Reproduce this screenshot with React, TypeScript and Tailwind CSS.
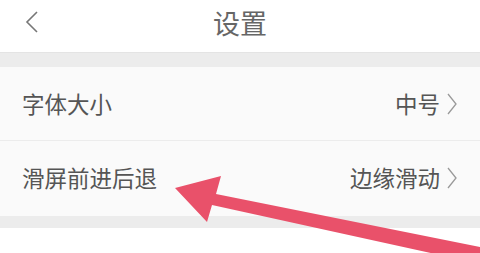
export default function App() {
  return (
    <div
      className="relative w-[480px] h-[253px] overflow-hidden bg-white text-[#555]"
      style={{ fontFamily: '"Noto Sans CJK SC", "Noto Sans", sans-serif' }}
    >
      {/* Header */}
      <header className="relative h-[53px] flex items-center justify-center bg-white border-b border-[#e4e4e4]">
        <svg
          className="absolute left-[24px] top-[10px]"
          width="16"
          height="24"
          viewBox="0 0 16 24"
          fill="none"
        >
          <path d="M13 2 L3 12 L13 22" stroke="#777" strokeWidth="1.6" />
        </svg>
        <h1 className="text-[27px] leading-none text-[#666] -mt-[8px]">设置</h1>
      </header>

      <div className="h-[14px] bg-[#ececec]" />

      {/* Rows */}
      <div className="bg-[#fafafa]">
        <div className="h-[74px] flex items-center justify-between pl-[22px] pr-[22px] border-b border-[#ececec]">
          <span className="text-[22.5px] leading-none">字体大小</span>
          <span className="flex items-center gap-[6px] text-[22.5px] leading-none">
            中号
            <svg width="12" height="22" viewBox="0 0 12 22" fill="none">
              <path d="M2 1 L10 11 L2 21" stroke="#999" strokeWidth="1.3" />
            </svg>
          </span>
        </div>
        <div className="h-[75px] flex items-center justify-between pl-[22px] pr-[22px]">
          <span className="text-[22.5px] leading-none -mt-[2px]">滑屏前进后退</span>
          <span className="flex items-center gap-[6px] text-[22.5px] leading-none -mt-[2px]">
            边缘滑动
            <svg width="12" height="22" viewBox="0 0 12 22" fill="none">
              <path d="M2 1 L10 11 L2 21" stroke="#999" strokeWidth="1.3" />
            </svg>
          </span>
        </div>
      </div>

      <div className="h-[12px] bg-[#ececec]" />
      <div className="h-[24px] bg-white" />

      {/* Annotation arrow */}
      <svg
        className="absolute left-0 top-0 pointer-events-none"
        width="480"
        height="253"
        viewBox="0 0 480 253"
      >
        <polygon
          points="175,188 221,176 216,194 490,249 490,266 212,205 207,222"
          fill="#e9516a"
        />
      </svg>
    </div>
  );
}
